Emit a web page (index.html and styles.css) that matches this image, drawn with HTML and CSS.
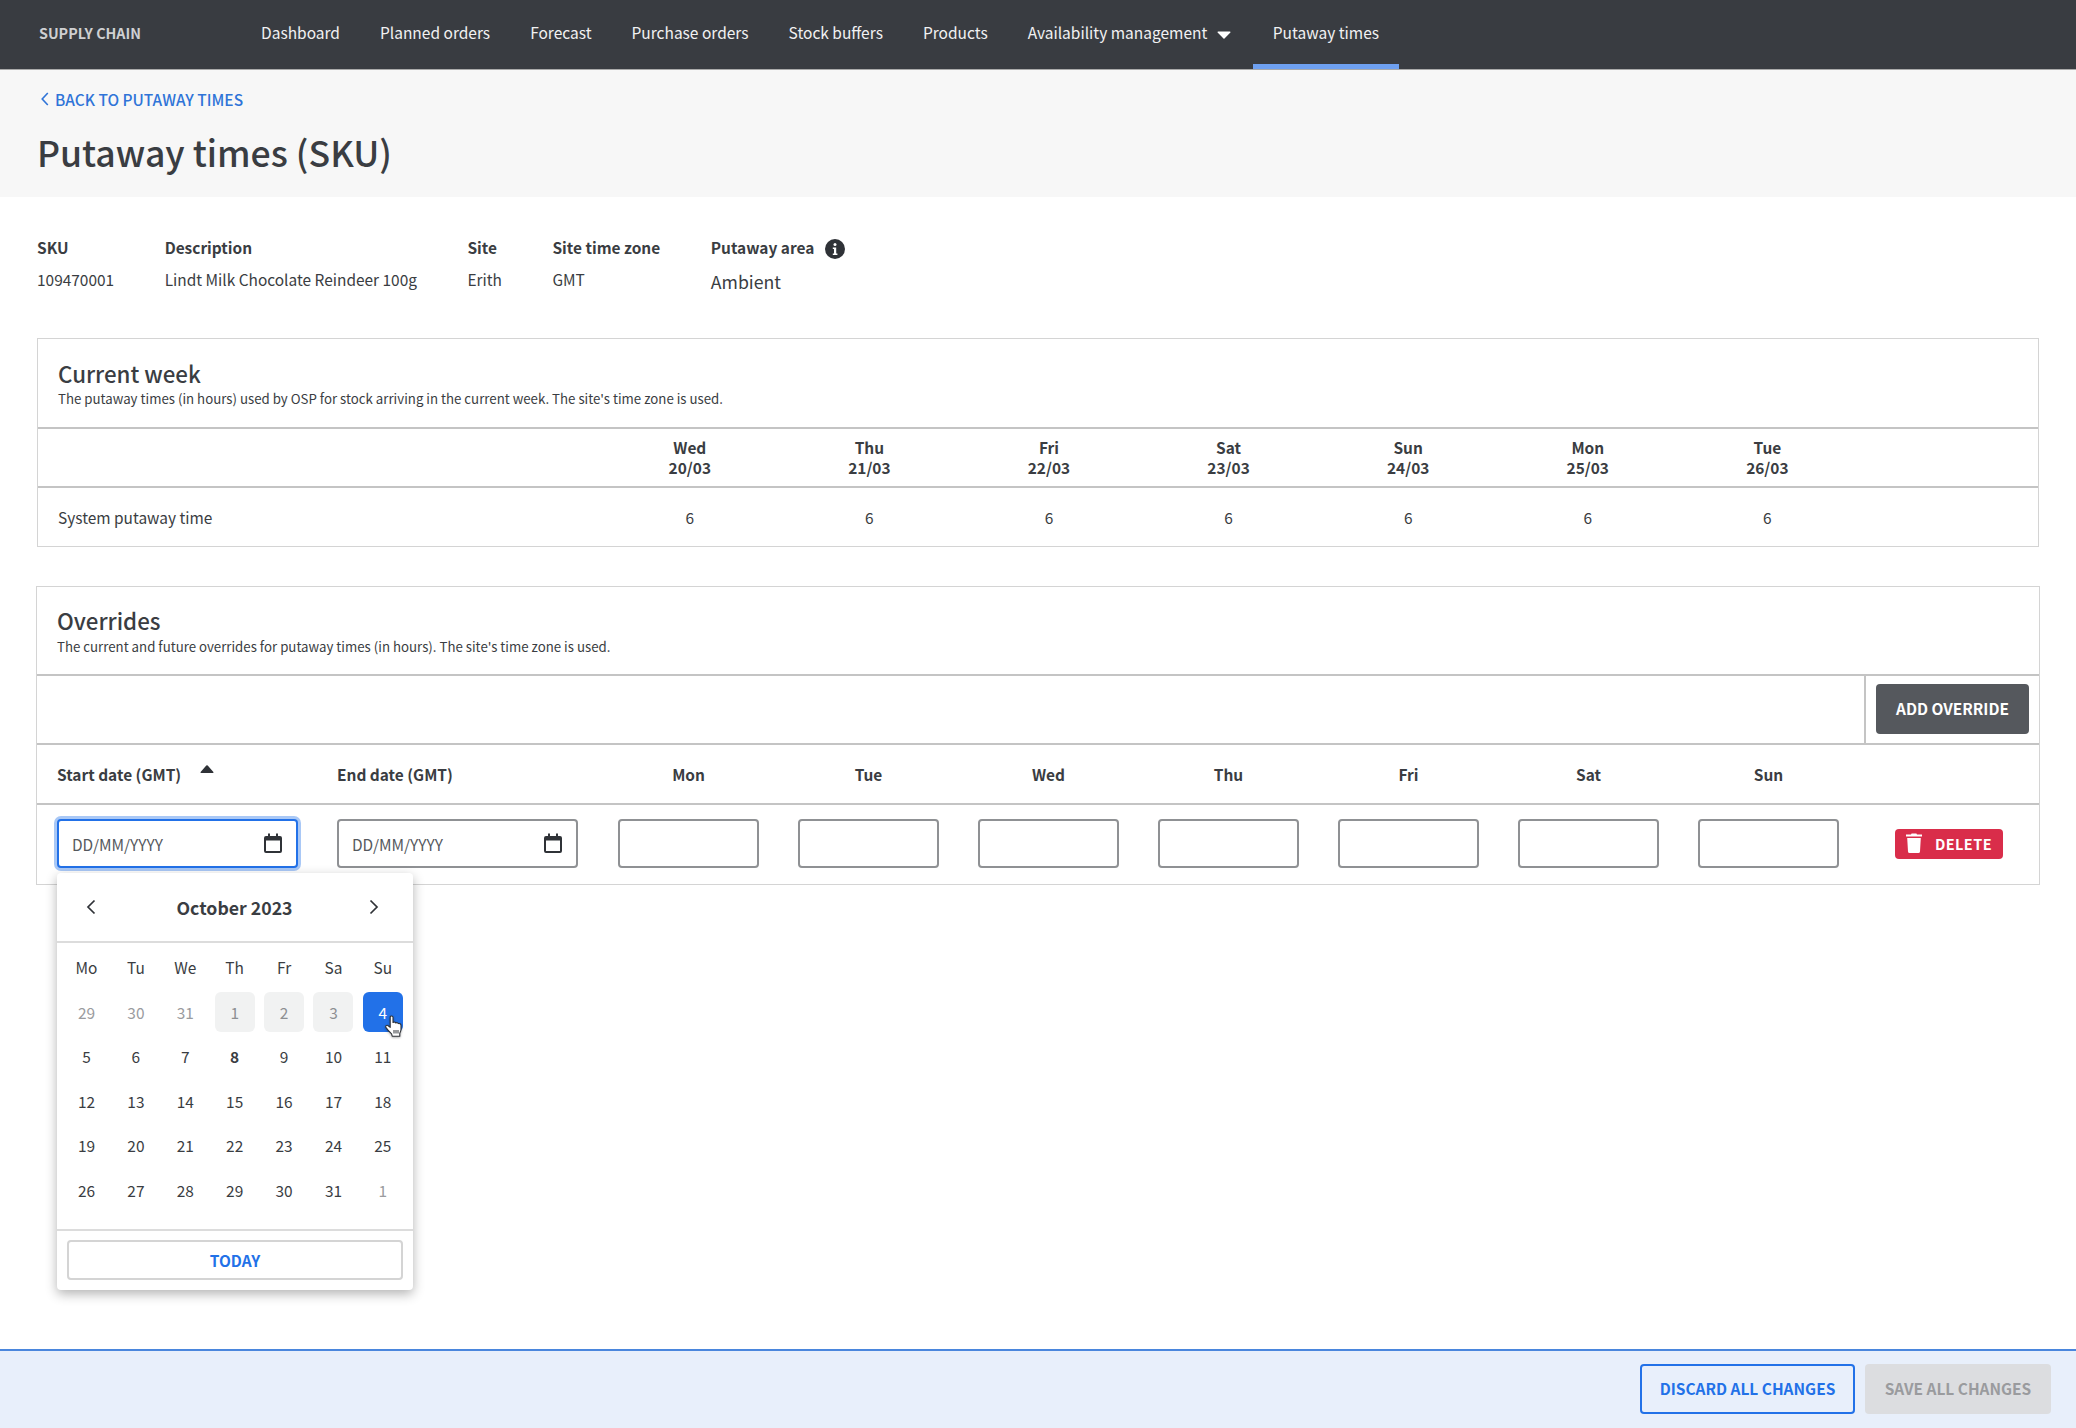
FILE: index.html
```html
<!DOCTYPE html>
<html lang="en">
<head>
    <meta charset="UTF-8">
    <title>Putaway times (SKU)</title>
    <link rel="stylesheet" href="styles.css">
</head>
<body>

<div class="page">
    <!-- top navigation -->
    <nav class="topnav">
        <span class="brand">SUPPLY CHAIN</span>
        <a class="nav-item">Dashboard</a>
        <a class="nav-item">Planned orders</a>
        <a class="nav-item">Forecast</a>
        <a class="nav-item">Purchase orders</a>
        <a class="nav-item">Stock buffers</a>
        <a class="nav-item">Products</a>
        <a class="nav-item">Availability management
            <svg class="nav-caret" viewBox="0 0 14 8" width="14" height="8"><path d="M1 0.5h12a0.6 0.6 0 0 1 0.4 1L7.5 7.4a0.7 0.7 0 0 1-1 0L0.6 1.5a0.6 0.6 0 0 1 0.4-1z" fill="#fff"/></svg>
        </a>
        <a class="nav-item active">Putaway times</a>
    </nav>

    <header class="page-header">
        <a class="back-link">
            <svg viewBox="0 0 8 14" width="8" height="14"><path d="M6.8 1L1.2 7l5.6 6" fill="none" stroke="#2f74d8" stroke-width="1.6"/></svg>
            BACK TO PUTAWAY TIMES
        </a>
        <h1>Putaway times (SKU)</h1>
    </header>

    <main class="content">
        <!-- sku details -->
        <div class="meta">
            <div class="meta-col"><div class="meta-label">SKU</div><div class="meta-value">109470001</div></div>
            <div class="meta-col"><div class="meta-label">Description</div><div class="meta-value">Lindt Milk Chocolate Reindeer 100g</div></div>
            <div class="meta-col"><div class="meta-label">Site</div><div class="meta-value">Erith</div></div>
            <div class="meta-col"><div class="meta-label">Site time zone</div><div class="meta-value">GMT</div></div>
            <div class="meta-col">
                <div class="meta-label">Putaway area
                    <svg class="info-icon" viewBox="0 0 20 20" width="20" height="20"><circle cx="10" cy="10" r="10" fill="#2f3237"/><circle cx="10" cy="5.6" r="1.5" fill="#fff"/><path d="M7.8 8.4h3.4v6h1.2v1.6H7.8v-1.6h1.2v-4.4H7.8z" fill="#fff"/></svg>
                </div>
                <div class="meta-value large">Ambient</div>
            </div>
        </div>

        <!-- current week -->
        <section class="card week-card">
            <div class="card-title">
                <h2>Current week</h2>
                <p>The putaway times (in hours) used by OSP for stock arriving in the current week. The site's time zone is used.</p>
            </div>
            <div class="week-grid week-head">
                <div></div>
                <div class="center">Wed<br>20/03</div>
                <div class="center">Thu<br>21/03</div>
                <div class="center">Fri<br>22/03</div>
                <div class="center">Sat<br>23/03</div>
                <div class="center">Sun<br>24/03</div>
                <div class="center">Mon<br>25/03</div>
                <div class="center">Tue<br>26/03</div>
            </div>
            <div class="week-grid week-row">
                <div>System putaway time</div>
                <div class="center">6</div>
                <div class="center">6</div>
                <div class="center">6</div>
                <div class="center">6</div>
                <div class="center">6</div>
                <div class="center">6</div>
                <div class="center">6</div>
            </div>
        </section>

        <!-- overrides -->
        <section class="card overrides-card">
            <div class="card-title">
                <h2>Overrides</h2>
                <p>The current and future overrides for putaway times (in hours). The site's time zone is used.</p>
            </div>
            <div class="toolbar">
                <div class="toolbar-space"></div>
                <div class="toolbar-action"><button class="btn btn-dark">ADD OVERRIDE</button></div>
            </div>
            <div class="override-grid override-head">
                <div class="sort-cell">Start date (GMT)
                    <svg class="sort-icon" viewBox="0 0 14 8" width="14" height="8"><path d="M6.3 0.6a1 1 0 0 1 1.4 0L13.4 7a0.6 0.6 0 0 1-0.4 1H1a0.6 0.6 0 0 1-0.4-1z" fill="#2f3237"/></svg>
                </div>
                <div>End date (GMT)</div>
                <div class="center">Mon</div>
                <div class="center">Tue</div>
                <div class="center">Wed</div>
                <div class="center">Thu</div>
                <div class="center">Fri</div>
                <div class="center">Sat</div>
                <div class="center">Sun</div>
                <div></div>
            </div>
            <div class="override-grid override-row">
                <div class="date-field focused">
                    <input type="text" placeholder="DD/MM/YYYY">
                    <svg class="cal-icon" viewBox="0 0 18 20" width="18" height="20"><path d="M4 0.5h2v2.5h6V0.5h2V3h2a2 2 0 0 1 2 2v13a2 2 0 0 1-2 2H2a2 2 0 0 1-2-2V5a2 2 0 0 1 2-2h2zM2 7.5V18h14V7.5z" fill="#2f3237"/></svg>
                </div>
                <div class="date-field">
                    <input type="text" placeholder="DD/MM/YYYY">
                    <svg class="cal-icon" viewBox="0 0 18 20" width="18" height="20"><path d="M4 0.5h2v2.5h6V0.5h2V3h2a2 2 0 0 1 2 2v13a2 2 0 0 1-2 2H2a2 2 0 0 1-2-2V5a2 2 0 0 1 2-2h2zM2 7.5V18h14V7.5z" fill="#2f3237"/></svg>
                </div>
                <input class="num-input" type="text">
                <input class="num-input" type="text">
                <input class="num-input" type="text">
                <input class="num-input" type="text">
                <input class="num-input" type="text">
                <input class="num-input" type="text">
                <input class="num-input" type="text">
                <div class="center">
                    <button class="btn btn-delete">
                        <svg viewBox="0 0 18 20" width="18" height="20"><path d="M6 1.6l0.6-1.1h4.8l0.6 1.1h5v2H1v-2zM2.2 5h13.6l-0.8 13.4a1.6 1.6 0 0 1-1.6 1.5H4.6A1.6 1.6 0 0 1 3 18.4z" fill="#fff"/></svg>
                        DELETE
                    </button>
                </div>

                <!-- date picker, open over the page -->
                <div class="datepicker">
                    <div class="dp-head">
                        <svg viewBox="0 0 10 16" width="10" height="16"><path d="M8.5 1.5L2 8l6.5 6.5" fill="none" stroke="#2f3237" stroke-width="1.7"/></svg>
                        <span class="dp-month">October 2023</span>
                        <svg viewBox="0 0 10 16" width="10" height="16"><path d="M1.5 1.5L8 8l-6.5 6.5" fill="none" stroke="#2f3237" stroke-width="1.7"/></svg>
                    </div>
                    <div class="dp-grid" id="dp-grid">
                        <div class="dp-dow">Mo</div><div class="dp-dow">Tu</div><div class="dp-dow">We</div><div class="dp-dow">Th</div><div class="dp-dow">Fr</div><div class="dp-dow">Sa</div><div class="dp-dow">Su</div>
                        <div class="dp-day muted">29</div><div class="dp-day muted">30</div><div class="dp-day muted">31</div><div class="dp-day past">1</div><div class="dp-day past">2</div><div class="dp-day past">3</div>
                        <div class="dp-day selected">4
                            <svg class="hand-cursor" viewBox="0 0 21 24" width="21" height="24"><path d="M6.2 2.2c0-1.6 2.8-1.6 2.8 0v5.3c1-.6 2.2-.4 2.7.4 1-.5 2.2-.2 2.6.7 1.2-.4 2.7.3 2.7 1.8v4.2c0 1.6-.6 2.6-1.2 3.6v3H8.2l-.6-2.3C5.6 17 3.5 14.8 2 12.6c-1-1.5.8-3 2.2-1.9l2 1.6z" fill="#fff" stroke="#2f3237" stroke-width="1.1" stroke-linejoin="round"/><path d="M10 15v3.5M12 15v3.5M14 15v3.5" stroke="#2f3237" stroke-width="1"/></svg>
                        </div>
                        <div class="dp-day">5</div><div class="dp-day">6</div><div class="dp-day">7</div><div class="dp-day today">8</div><div class="dp-day">9</div><div class="dp-day">10</div><div class="dp-day">11</div>
                        <div class="dp-day">12</div><div class="dp-day">13</div><div class="dp-day">14</div><div class="dp-day">15</div><div class="dp-day">16</div><div class="dp-day">17</div><div class="dp-day">18</div>
                        <div class="dp-day">19</div><div class="dp-day">20</div><div class="dp-day">21</div><div class="dp-day">22</div><div class="dp-day">23</div><div class="dp-day">24</div><div class="dp-day">25</div>
                        <div class="dp-day">26</div><div class="dp-day">27</div><div class="dp-day">28</div><div class="dp-day">29</div><div class="dp-day">30</div><div class="dp-day">31</div><div class="dp-day muted">1</div>
                    </div>
                    <div class="dp-foot"><button class="dp-today">TODAY</button></div>
                </div>
            </div>
        </section>
    </main>

    <footer class="savebar">
        <button class="btn btn-outline">DISCARD ALL CHANGES</button>
        <button class="btn btn-disabled">SAVE ALL CHANGES</button>
    </footer>
</div>

</body>
</html>
```

FILE: styles.css
```css
* {
    box-sizing: border-box;
}
body {
    margin: 0;
    font-family: "Noto Sans CJK SC", "Noto Sans", sans-serif;
    font-size: 15.45px;
    color: #3a3d42;
    background-color: #fff;
}
.page {
    min-height: 1428px;
    display: flex;
    flex-direction: column;
}
.center {
    text-align: center;
}
/* top navigation */
.topnav {
    height: 70px;
    background-color: #393c41;
    border-bottom: 1px solid #aaa;
    display: flex;
    align-items: stretch;
    padding-left: 39px;
    color: #fff;
}
.brand {
    width: 202px;
    font-size: 14.3px;
    font-weight: 700;
    color: #cfd0d2;
    line-height: 65px;
}
.nav-item {
    padding: 0 20px;
    font-size: 15.5px;
    line-height: 65px;
    color: #f1f1f2;
}
.nav-caret {
    margin: 0 2px 0 6px;
}
.nav-item.active {
    border-bottom: 5px solid #6ea0f0;
    height: 69px;
}
/* page header */
.page-header {
    height: 127px;
    background-color: #f7f7f7;
    padding: 17px 37px 0;
}
.back-link {
    display: flex;
    align-items: center;
    gap: 6px;
    font-size: 15.45px;
    font-weight: 500;
    color: #2f74d8;
    padding-left: 4px;
    height: 24px;
}
.page-header h1 {
    margin: 16px 0 0;
    font-size: 35.6px;
    font-weight: 500;
    line-height: 50px;
    color: #3a3d42;
}
/* sku details */
.content {
    padding: 37px 36px 0;
    flex: 1;
}
.meta {
    display: flex;
    gap: 50.5px;
    padding-left: 1px;
    height: 104px;
}
.meta-label {
    font-weight: 700;
    line-height: 26px;
    display: flex;
    align-items: center;
}
.info-icon {
    margin: 3px 0 0 11px;
}
.meta-value {
    margin-top: 6px;
    line-height: 26px;
}
.meta-value.large {
    font-size: 17.7px;
    line-height: 30px;
}
/* cards */
.card {
    border: 1px solid #d4d4d4;
    background-color: #fff;
}
.card-title {
    padding: 20px 20px 0;
}
.card-title h2 {
    margin: 0;
    font-size: 22.3px;
    font-weight: 500;
    line-height: 30px;
}
.card-title p {
    margin: 1px 0 0;
    font-size: 13.26px;
    line-height: 18px;
}
.week-card {
    margin: 0 1px;
    height: 209px;
}
.week-card .card-title {
    height: 88px;
    padding-top: 19px;
}
.week-card .card-title p {
    margin-top: 2px;
}
.week-grid {
    display: grid;
    grid-template-columns: 542px repeat(7, 179.6px);
    padding-left: 20px;
}
.week-head {
    height: 61px;
    border-top: 2px solid #c4c4c4;
    border-bottom: 2px solid #c4c4c4;
    font-weight: 700;
    line-height: 20px;
    padding-top: 8px;
}
.week-row {
    height: 58px;
    line-height: 58px;
}
.overrides-card {
    margin-top: 39px;
    height: 299px;
}
.overrides-card .card-title {
    height: 87px;
    padding-top: 18px;
}
.overrides-card .card-title p {
    margin-top: 3px;
}
.toolbar {
    display: flex;
    height: 71px;
    border-top: 2px solid #c4c4c4;
    border-bottom: 2px solid #c4c4c4;
}
.toolbar-space {
    flex: 1;
    border-right: 2px solid #c4c4c4;
}
.toolbar-action {
    padding: 8px 10px 0;
}
/* buttons */
.btn {
    font-family: inherit;
    font-weight: 700;
    border-radius: 4px;
    border: none;
    font-size: 15.45px;
    color: #fff;
    padding: 0 0 2px;
}
.btn-dark {
    background-color: #55585d;
    width: 153px;
    height: 50px;
}
.btn-delete {
    background-color: #d92d4a;
    width: 108px;
    height: 30px;
    display: inline-flex;
    align-items: center;
    justify-content: center;
    gap: 12px;
    font-size: 14.5px;
    letter-spacing: 0.4px;
    padding: 0 0 1px;
}
.btn-outline {
    background-color: transparent;
    border: 2px solid #2271e8;
    color: #2271e8;
    width: 215px;
    height: 50px;
}
.btn-disabled {
    background-color: #dcdde0;
    color: #9a9b9e;
    width: 186px;
    height: 50px;
}
/* overrides table */
.override-grid {
    display: grid;
    grid-template-columns: 241px 242px repeat(7, 141px) 141px;
    column-gap: 39px;
    padding-left: 20px;
}
.override-head {
    height: 60px;
    border-bottom: 2px solid #c4c4c4;
    font-weight: 700;
    line-height: 59px;
}
.sort-cell {
    position: relative;
}
.sort-icon {
    position: absolute;
    left: 143px;
    top: 20px;
}
.override-row {
    position: relative;
    height: 79px;
    padding-top: 14px;
    align-items: center;
    align-content: start;
}
.date-field {
    position: relative;
    width: 241px;
    height: 49px;
}
.date-field input, .num-input {
    display: block;
    width: 100%;
    height: 49px;
    border: 2px solid #8f9194;
    border-radius: 4px;
    font-family: inherit;
    font-size: 15.45px;
    padding: 0 13px;
    background-color: #fff;
}
.num-input {
    width: 141px;
}
.date-field input::placeholder {
    color: #55585d;
    opacity: 1;
}
.date-field.focused input {
    border-color: #2271e8;
    box-shadow: 0 0 0 3px #a9c8f6;
}
.cal-icon {
    position: absolute;
    right: 16px;
    top: 14px;
}
.center .btn-delete {
    vertical-align: middle;
}
/* date picker */
.datepicker {
    position: absolute;
    left: 20px;
    top: 68px;
    width: 356px;
    height: 417px;
    background-color: #fff;
    border-radius: 4px;
    box-shadow: 0 4px 12px rgba(0, 0, 0, 0.3);
    z-index: 5;
}
.dp-head {
    height: 70px;
    border-bottom: 2px solid #dcdcdc;
    display: flex;
    align-items: center;
    justify-content: space-between;
    padding: 0 34px 0 29px;
    font-size: 17.7px;
    font-weight: 700;
}
.dp-month {
    margin-left: 4px;
}
.dp-grid {
    display: grid;
    grid-template-columns: repeat(7, 40px);
    grid-auto-rows: 40px;
    column-gap: 9.4px;
    row-gap: 4.6px;
    padding: 4px 0 0 9.5px;
    justify-content: start;
}
.dp-dow, .dp-day {
    display: flex;
    align-items: center;
    justify-content: center;
    position: relative;
    border-radius: 6px;
}
.dp-day.muted {
    color: #9a9b9e;
}
.dp-day.past {
    background-color: #f1f2f2;
    color: #8d8f92;
}
.dp-day.today {
    font-weight: 700;
}
.dp-day.selected {
    background-color: #2271e8;
    color: #fff;
}
.hand-cursor {
    position: absolute;
    left: 21px;
    top: 23px;
    filter: drop-shadow(0 1px 1px rgba(0, 0, 0, 0.3));
}
.dp-foot {
    position: absolute;
    left: 0;
    right: 0;
    bottom: 0;
    height: 61px;
    border-top: 2px solid #dcdcdc;
    padding: 9px 10px 0;
}
.dp-today {
    width: 100%;
    height: 40px;
    background-color: #fff;
    border: 2px solid #d4d4d4;
    border-radius: 4px;
    font-family: inherit;
    font-size: 15.45px;
    font-weight: 700;
    color: #2271e8;
}
/* save bar */
.savebar {
    height: 79px;
    background-color: #e8effb;
    border-top: 2px solid #4a86dd;
    display: flex;
    justify-content: flex-end;
    align-items: flex-start;
    gap: 10px;
    padding: 13px 25px 0 0;
}
```
